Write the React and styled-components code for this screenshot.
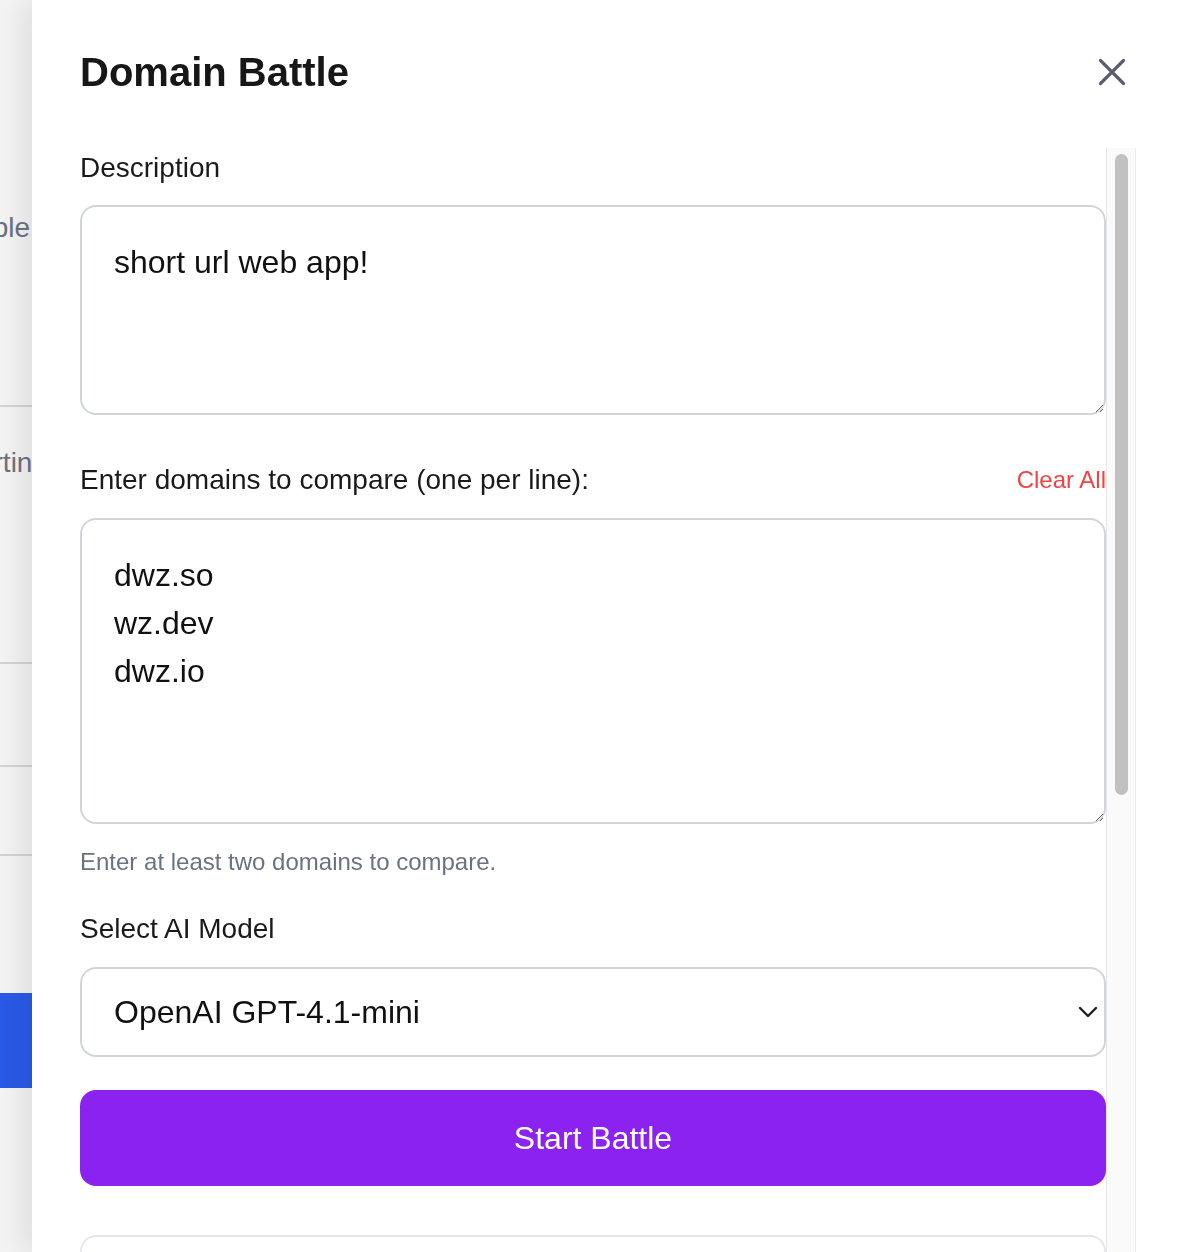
import styled, { createGlobalStyle } from "styled-components";

const GlobalStyle = createGlobalStyle`
  html, body {
    margin: 0;
    height: 100%;
    overflow: hidden;
    background: #f4f4f5;
    font-family: "Liberation Sans", Arial, Helvetica, sans-serif;
  }
  * { box-sizing: border-box; }
`;

function App() {
  return (
    <>
      <GlobalStyle />
      <BackPage>
        <BackHint>Available</BackHint>
        <BackDivider $height={151} />
        <BackTab>Sorting</BackTab>
        <BackDivider $height={173} />
        <BackDivider $height={103} />
        <BackDivider $height={89} />
        <BackSpacer />
        <BackButton />
      </BackPage>

      <Drawer>
        <Header>
          <Title>Domain Battle</Title>
          <CloseButton aria-label="Close">
            <svg width="28" height="28" viewBox="0 0 28 28" fill="none">
              <path
                d="M2.5 2.5L25.5 25.5M25.5 2.5L2.5 25.5"
                stroke="#596070"
                strokeWidth="3.2"
                strokeLinecap="round"
              />
            </svg>
          </CloseButton>
        </Header>

        <ScrollArea>
          <Form>
            <Label>Description</Label>
            <TextArea $height={210} defaultValue="short url web app!" />

            <LabelRow>
              <Label $flush>Enter domains to compare (one per line):</Label>
              <ClearButton>Clear All</ClearButton>
            </LabelRow>
            <TextArea $height={306} defaultValue={"dwz.so\nwz.dev\ndwz.io"} />
            <Hint>Enter at least two domains to compare.</Hint>

            <Label $top={29}>Select AI Model</Label>
            <SelectWrap>
              <Select defaultValue="gpt-4.1-mini">
                <option value="gpt-4.1-mini">OpenAI GPT-4.1-mini</option>
                <option value="gpt-4.1">OpenAI GPT-4.1</option>
              </Select>
              <Chevron width="20" height="12" viewBox="0 0 20 12" fill="none">
                <path
                  d="M2 2L10 10L18 2"
                  stroke="#1f1f1f"
                  strokeWidth="2.4"
                  strokeLinecap="round"
                  strokeLinejoin="round"
                />
              </Chevron>
            </SelectWrap>

            <StartButton>Start Battle</StartButton>

            <ResultCard />
          </Form>
          <ScrollTrack>
            <ScrollThumb />
          </ScrollTrack>
        </ScrollArea>
      </Drawer>
    </>
  );
}

export default App;

/* page behind the drawer */

const BackPage = styled.main`
  display: flex;
  flex-direction: column;
  width: 600px;
  margin-left: -268px;
  padding-top: 200px;
`;

const BackHint = styled.div`
  width: 298px;
  text-align: right;
  white-space: nowrap;
  font-size: 28px;
  line-height: 56px;
  color: #6b7280;
`;

const BackDivider = styled.div`
  height: ${(p) => p.$height}px;
  border-bottom: 2px solid #d4d4d8;
`;

const BackTab = styled.div`
  width: 316px;
  margin-top: 28px;
  text-align: right;
  white-space: nowrap;
  font-size: 28px;
  line-height: 56px;
  color: #71717a;
`;

const BackSpacer = styled.div`
  height: 137px;
`;

const BackButton = styled.div`
  height: 95px;
  background: #2a5ae8;
`;

/* drawer */

const Drawer = styled.aside`
  position: fixed;
  top: 0;
  left: 32px;
  right: 0;
  bottom: 0;
  display: flex;
  flex-direction: column;
  padding: 44px 46px 0 48px;
  background: #fff;
  box-shadow: -10px 0 28px rgba(0, 0, 0, 0.09);
`;

const Header = styled.header`
  display: flex;
  align-items: center;
  justify-content: space-between;
  height: 56px;
  margin-bottom: 48px;
`;

const Title = styled.h2`
  margin: 0;
  font-size: 40px;
  font-weight: 700;
  color: #171717;
`;

const CloseButton = styled.button`
  display: flex;
  align-items: center;
  justify-content: center;
  width: 48px;
  height: 48px;
  padding: 0;
  border: none;
  background: transparent;
  cursor: pointer;
`;

const ScrollArea = styled.div`
  flex: 1;
  min-height: 0;
  display: flex;
  overflow: hidden;
`;

const Form = styled.div`
  flex: 1;
  min-width: 0;
  display: flex;
  flex-direction: column;
`;

const ScrollTrack = styled.div`
  flex-shrink: 0;
  width: 30px;
  padding: 6px 7px 0 8px;
  background: #fafafa;
  border-left: 1px solid #e6e6e6;
  border-right: 1px solid #ececec;
`;

const ScrollThumb = styled.div`
  height: 641px;
  border-radius: 8px;
  background: #c1c1c1;
`;

const Label = styled.label`
  display: block;
  margin: ${(p) => (p.$top ? `${p.$top}px 0 18px` : p.$flush ? "0" : "0 0 17px")};
  font-size: 28px;
  line-height: 40px;
  color: #1a1a1a;
`;

const LabelRow = styled.div`
  display: flex;
  align-items: center;
  justify-content: space-between;
  margin: 45px 0 18px;
`;

const ClearButton = styled.button`
  padding: 0;
  border: none;
  background: transparent;
  font-family: inherit;
  font-size: 24px;
  line-height: 40px;
  color: #ef4444;
  cursor: pointer;
`;

const TextArea = styled.textarea`
  flex-shrink: 0;
  width: 100%;
  height: ${(p) => p.$height}px;
  padding: 31px 32px;
  border: 2px solid #d1d5db;
  border-radius: 16px;
  background: #fff;
  font-family: inherit;
  font-size: 32px;
  line-height: 48px;
  color: #111;
  resize: vertical;
  outline: none;
`;

const Hint = styled.p`
  margin: 20px 0 0;
  font-size: 24px;
  line-height: 36px;
  color: #6b7280;
`;

const SelectWrap = styled.div`
  position: relative;
  flex-shrink: 0;
`;

const Select = styled.select`
  width: 100%;
  height: 90px;
  padding: 0 32px;
  border: 2px solid #d1d5db;
  border-radius: 16px;
  background: #fff;
  font-family: inherit;
  font-size: 32px;
  color: #111;
  appearance: none;
  outline: none;
`;

const Chevron = styled.svg`
  position: absolute;
  right: 8px;
  top: 39px;
  pointer-events: none;
`;

const StartButton = styled.button`
  flex-shrink: 0;
  width: 100%;
  height: 96px;
  margin-top: 33px;
  border: none;
  border-radius: 16px;
  background: #8b22ef;
  font-family: inherit;
  font-size: 32px;
  color: #fff;
  cursor: pointer;
`;

const ResultCard = styled.section`
  flex-shrink: 0;
  height: 740px;
  margin-top: 49px;
  border: 2px solid #e5e7eb;
  border-radius: 16px;
  background: #fff;
`;
